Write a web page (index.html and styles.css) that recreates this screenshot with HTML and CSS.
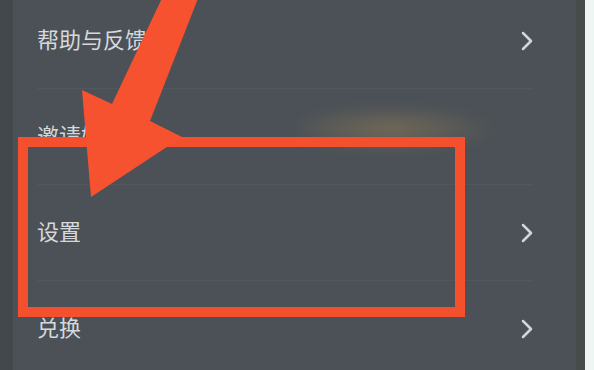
FILE: index.html
```html
<!DOCTYPE html>
<html lang="zh-CN">
<head>
<meta charset="utf-8">
<title>设置</title>
<link rel="stylesheet" href="styles.css">
</head>
<body>
<div class="screen">
  <div class="edge-left"></div>
  <div class="panel">
    <ul class="menu">
      <li class="item">
        <span class="label">帮助与反馈</span>
        <svg class="chevron" viewBox="0 0 12 20" width="12" height="20"><polyline points="2,2 10,10 2,18"/></svg>
      </li>
      <li class="item">
        <span class="label">邀请好友</span>
      </li>
      <li class="item">
        <span class="label">设置</span>
        <svg class="chevron" viewBox="0 0 12 20" width="12" height="20"><polyline points="2,2 10,10 2,18"/></svg>
      </li>
      <li class="item">
        <span class="label">兑换</span>
        <svg class="chevron" viewBox="0 0 12 20" width="12" height="20"><polyline points="2,2 10,10 2,18"/></svg>
      </li>
    </ul>
  </div>
  <div class="edge-right"></div>
</div>
<div class="glow"></div>
<div class="highlight"></div>
<svg class="arrow" viewBox="0 0 594 370" width="594" height="370">
  <polygon points="163,-4 199,-4 150,121 182,137 91,197 82,90 112,104"/>
</svg>
</body>
</html>
```
FILE: styles.css
```css
html, body {
  margin: 0;
  padding: 0;
}
body {
  width: 594px;
  height: 370px;
  overflow: hidden;
  background: #eef6f3;
  font-family: "Noto Sans CJK SC", "Noto Sans", sans-serif;
  position: relative;
}
.screen {
  display: flex;
  width: 585px;
  height: 370px;
}
.edge-left {
  width: 13px;
  background: #43484d;
}
.edge-right {
  width: 9px;
  background: #464c49;
}
.panel {
  flex: 1;
  background: #4b5157;
  overflow: hidden;
}
.menu {
  list-style: none;
  margin: -7px 43px 0 24px;
  padding: 0;
}
.item {
  height: 95px;
  display: flex;
  align-items: center;
  justify-content: space-between;
  border-bottom: 1px solid #52585e;
}
.label {
  font-size: 22px;
  line-height: 22px;
  padding-bottom: 5px;
  color: #d6d9dc;
}
.chevron {
  display: block;
}
.chevron polyline {
  fill: none;
  stroke: #d3d6d9;
  stroke-width: 2.5;
  stroke-linecap: round;
  stroke-linejoin: round;
}
.glow {
  position: absolute;
  left: 300px;
  top: 104px;
  width: 200px;
  height: 50px;
  background: radial-gradient(ellipse at 45% 50%, rgba(230, 175, 90, 0.26), rgba(230, 175, 90, 0) 70%);
  filter: blur(6px);
}
.highlight {
  position: absolute;
  left: 18px;
  top: 137px;
  width: 447px;
  height: 180px;
  box-sizing: border-box;
  border: 10px solid #f4502d;
}
.arrow {
  position: absolute;
  left: 0;
  top: 0;
}
.arrow polygon {
  fill: #f6522f;
}
```
